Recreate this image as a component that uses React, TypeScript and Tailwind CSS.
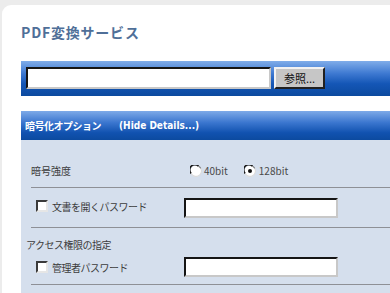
import React from 'react';

const jp = { fontFamily: '"Noto Sans CJK JP", "Liberation Sans", sans-serif' };

function Radio({ checked }: { checked?: boolean }) {
  return (
    <svg width="12" height="12" viewBox="0 0 12 12" className="shrink-0">
      <circle cx="6" cy="6" r="5.5" fill="#ffffff" />
      <path d="M1.2 8.5 A5 5 0 0 1 8.5 1.2" fill="none" stroke="#1a1a1a" strokeWidth="1.6" />
      <path d="M8.5 1.2 A5 5 0 0 1 10.8 3.5" fill="none" stroke="#7a7a7a" strokeWidth="1.2" />
      <path d="M10.8 3.5 A5 5 0 0 1 1.2 8.5" fill="none" stroke="#dcdcdc" strokeWidth="1.2" />
      {checked && <circle cx="6" cy="6" r="2" fill="#111111" />}
    </svg>
  );
}

function CheckBox() {
  return (
    <span className="block w-[12px] h-[12px] shrink-0 bg-white border-2 border-t-[#3a3a3a] border-l-[#3a3a3a] border-b-[#e6e6e6] border-r-[#e6e6e6]" />
  );
}

function TextBox({ className }: { className?: string }) {
  return (
    <div
      className={`bg-white border-2 border-t-[#151515] border-l-[#151515] border-b-[#c8c8c8] border-r-[#c8c8c8] ${className ?? ''}`}
    />
  );
}

export default function App() {
  return (
    <div className="w-[390px] h-[293px] overflow-hidden bg-[#ececec] pt-[5px] pl-[2px]" style={jp}>
      <div className="bg-white rounded-tl-[9px] h-full pl-[19px] pt-[19px]">
        <h1
          className="text-[14px] leading-[16px] font-bold text-[#4f6f98] tracking-[0.8px]"
          style={jp}
        >
          PDF変換サービス
        </h1>

        {/* file bar */}
        <div className="mt-[21px] h-[35px] flex items-start pt-[6px] pl-[5px] bg-[linear-gradient(to_bottom,#80ade9_0%,#3f7ad2_35%,#1456b6_65%,#0c4a9f_100%)]">
          <TextBox className="w-[245px] h-[22px]" />
          <button className="ml-[3px] w-[51px] h-[22px] bg-[#c6c6c6] border-2 border-t-[#f2f2f2] border-l-[#f2f2f2] border-b-[#202020] border-r-[#202020] text-[11px] leading-none text-[#111] flex items-center justify-center">
            参照...
          </button>
        </div>

        {/* options header */}
        <div className="mt-[15px] h-[29px] flex items-center pl-[4px] text-white font-bold text-[10px] bg-[linear-gradient(to_bottom,#7eaae8_0%,#3b76cf_40%,#1152b0_75%,#0c4a9f_100%)]">
          <span className="tracking-[-0.5px]">暗号化オプション</span>
          <span className="ml-[18px] text-[10px]" style={{ fontFamily: '"DejaVu Sans Condensed", "DejaVu Sans", sans-serif' }}>
            (Hide Details...)
          </span>
        </div>

        {/* options body */}
        <div className="bg-[#d5dfed] h-[200px] pl-[10px] text-[10px] text-[#3c3c3c]">
          <div className="h-[48px] pt-[14px] flex items-center border-b border-[#8e9096]">
            <span className="w-[153px]">暗号強度</span>
            <div className="flex items-center pl-[6px] text-[#4a4a4a]">
              <Radio />
              <span className="ml-[2px]">40bit</span>
              <span className="ml-[16px]"><Radio checked /></span>
              <span className="ml-[3px]">128bit</span>
            </div>
          </div>

          <div className="h-[40px] flex items-center border-b border-[#8e9096]">
            <div className="w-[153px] flex items-center pl-[5px] -mt-[3px]">
              <CheckBox />
              <span className="ml-[4px] tracking-[-0.5px]">文書を開くパスワード</span>
            </div>
            <TextBox className="w-[154px] h-[20px]" />
          </div>

          <div className="h-[57px] border-b border-[#8e9096]">
            <div className="pt-[10px] -ml-[5px] leading-[14px] tracking-[-0.5px]">アクセス権限の指定</div>
            <div className="mt-[5px] flex items-center">
              <div className="w-[153px] flex items-center pl-[5px]">
                <CheckBox />
                <span className="ml-[4px] tracking-[-0.5px]">管理者パスワード</span>
              </div>
              <TextBox className="w-[154px] h-[20px]" />
            </div>
          </div>
        </div>
      </div>
    </div>
  );
}
